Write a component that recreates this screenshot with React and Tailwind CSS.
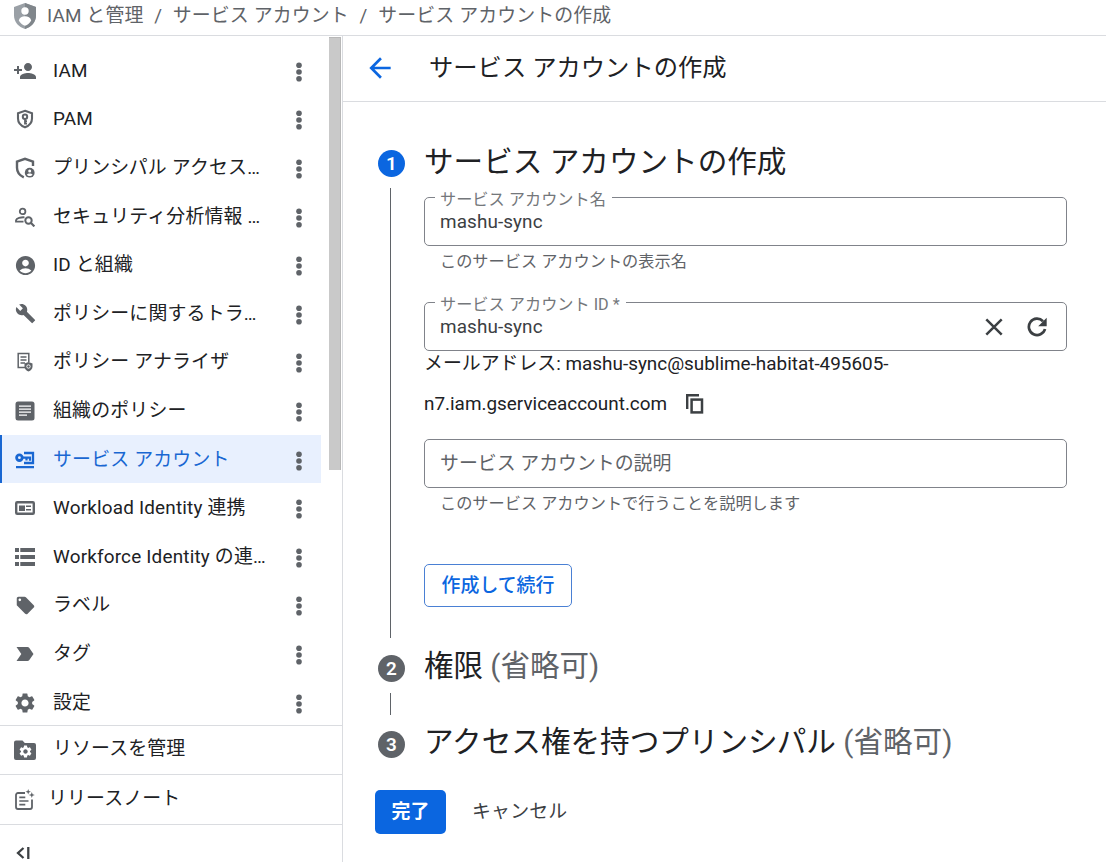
import React, { useState } from "react";
import {
  MdAccountCircle,
  MdArrowBack,
  MdBuild,
  MdLabelImportant,
  MdLocalOffer,
  MdPersonAdd,
  MdSettings,
} from "react-icons/md";

const ShieldLogo = () => (
  <svg width="22" height="26" viewBox="0 0 22 26">
    <path d="M11 0 22 4v8.500C22 19 17.500 24 11 26 4.500 24 0 19 0 12.500V4z" fill="#9aa0a6" />
    <path d="M11 0 22 4v8.500C22 19 17.500 24 11 26z" fill="#80868b" />
    <circle cx="11" cy="8" r="3.700" fill="#fff" />
    <path d="M4.800 17.500C5.500 14.500 8 13.200 11 13.200s5.500 1.300 6.200 4.300C15.800 20 13.800 21.800 11 22.800 8.200 21.800 6.200 20 4.800 17.500z" fill="#fff" />
  </svg>
);

const KeyShieldIcon = () => (
  <svg width="18" height="20" viewBox="0 0 18 20" fill="none" stroke="currentColor">
    <path d="M9 1.800 16 4.300v5.200c0 4-2.800 7.200-7 8.800-4.200-1.600-7-4.800-7-8.800V4.300z" strokeWidth="2.100" />
    <circle cx="9" cy="7.700" r="2.200" strokeWidth="2" />
    <path d="M9 10v5.500M9 12.200h2M9 14.500h2" strokeWidth="1.800" />
  </svg>
);

const ShieldPersonIcon = () => (
  <svg width="20" height="22" viewBox="0 0 20 22">
    <path
      d="M18 9V4.600L10 1.800 2 4.600v6.100c0 4.200 2.500 7.600 6.800 9.600"
      fill="none"
      stroke="currentColor"
      strokeWidth="2.400"
    />
    <circle cx="14.700" cy="15.700" r="4.900" fill="currentColor" />
    <circle cx="14.700" cy="14" r="1.500" fill="#fff" />
    <path d="M11.800 17.600c1.300-1.500 4.500-1.500 5.800 0-1.300 2-4.500 2-5.800 0z" fill="#fff" />
  </svg>
);

const PersonSearchIcon = () => (
  <svg width="20" height="20" viewBox="0 0 20 20" fill="none" stroke="currentColor">
    <circle cx="7.600" cy="4.400" r="2.800" strokeWidth="1.800" />
    <path d="M9.500 10.300C5.800 10 1.500 11.400 1 13.200v1.500h7.500" strokeWidth="1.800" />
    <circle cx="13.500" cy="13.500" r="3.200" strokeWidth="2" />
    <path d="m15.800 15.800 3.600 3.600" strokeWidth="2.200" />
  </svg>
);

const AnalyzerIcon = () => (
  <svg width="18" height="20" viewBox="0 0 18 20">
    <path
      d="M9 15.600H2.200V1.500h10.600v8.500M4.500 5h6M4.500 8h6M4.500 11h4.500"
      fill="none"
      stroke="currentColor"
      strokeWidth="1.500"
    />
    <path d="m12.500 10 4 1.400v3c0 2.400-1.600 4.100-4 5.100-2.400-1-4-2.700-4-5.100v-3z" fill="currentColor" />
    <circle cx="12.500" cy="14.500" r="1.700" fill="none" stroke="#fff" strokeWidth="0.900" />
  </svg>
);

const ArticleIcon = () => (
  <svg width="20" height="20" viewBox="0 0 20 20">
    <rect x="0.500" y="0.500" width="19" height="19" rx="2.500" fill="currentColor" />
    <path d="M4 5.200h12M4 8.200h12M4 11.200h12M4 14.200h8" stroke="#fff" strokeWidth="1.300" />
  </svg>
);

const ServiceAccountIcon = () => (
  <svg width="20" height="18" viewBox="0 0 20 18">
    <path d="M9 2h9v10H9M1 16.200h18" fill="none" stroke="currentColor" strokeWidth="2.300" />
    <circle cx="4.400" cy="6.700" r="2.800" fill="none" stroke="currentColor" strokeWidth="2.800" />
    <path d="M7 6.700h8v3M11.500 6.700v2.800" fill="none" stroke="currentColor" strokeWidth="2.200" />
  </svg>
);

const IdCardIcon = () => (
  <svg width="20" height="14" viewBox="0 0 20 14">
    <rect x="1.200" y="1.200" width="17.600" height="11.600" rx="1" fill="none" stroke="currentColor" strokeWidth="2.400" />
    <path d="M4 4.500h6v5.500H4zM11 4.500h5V6h-5zM11 8h5v1.500h-5z" fill="currentColor" />
  </svg>
);

const ListIcon = () => (
  <svg width="20" height="18" viewBox="0 0 20 18" fill="currentColor">
    <path d="M0 0h4v4H0zM5.300 0H20v4H5.300zM0 7h4v4H0zM5.300 7H20v4H5.300zM0 14h4v4H0zM5.300 14H20v4H5.300z" />
  </svg>
);

const FolderGearIcon = () => (
  <span className="relative block h-5 w-[22px]">
    <svg width="22" height="20" viewBox="0 0 22 20" fill="currentColor">
      <path d="M2 0.500h6.500L10.800 3H20a2 2 0 0 1 2 2v13a2 2 0 0 1-2 2H2a2 2 0 0 1-2-2V2.500a2 2 0 0 1 2-2z" />
    </svg>
    <MdSettings size={15} className="absolute top-[4px] left-[3.500px] text-white" />
  </span>
);

const ReleaseNotesIcon = () => (
  <svg width="20" height="21" viewBox="0 0 20 21" fill="none" stroke="currentColor">
    <path d="M10 4H3a2 2 0 0 0-2 2v12a2 2 0 0 0 2 2h12a2 2 0 0 0 2-2v-7.500" strokeWidth="1.800" />
    <path d="M4.300 8.300h6M4.300 12h9.200M4.300 15.700h6" strokeWidth="1.700" />
    <path
      d="m13.200 0 .7 2 2 .7-2 .7-.7 2-.7-2-2-.7 2-.7zM16.800 3l.8 2.200 2.200.8-2.200.8-.8 2.200-.8-2.200-2.200-.8 2.200-.8z"
      fill="currentColor"
      stroke="none"
    />
  </svg>
);

const CloseIcon = () => (
  <svg width="18" height="18" viewBox="0 0 18 18" fill="none" stroke="currentColor" strokeWidth="2.500">
    <path d="m1.300 1.300 15.400 15.400M16.700 1.300 1.300 16.700" />
  </svg>
);

const RefreshIcon = () => (
  <svg width="20" height="20" viewBox="0 0 20 20">
    <path
      d="M18 12a8.200 8.200 0 1 1-2-7.800"
      fill="none"
      stroke="currentColor"
      strokeWidth="2.700"
    />
    <path d="M19.700 0.700v8.500h-8.500z" fill="currentColor" />
  </svg>
);

const CopyIcon = () => (
  <svg width="18" height="20" viewBox="0 0 18 20" fill="none" stroke="currentColor">
    <path d="M1.200 15V1.200h11.800" strokeWidth="2.400" />
    <rect x="5.600" y="5.600" width="10.400" height="12.800" strokeWidth="2.500" />
  </svg>
);

const MoreIcon = () => (
  <svg width="6" height="20" viewBox="0 0 6 20" fill="currentColor">
    <circle cx="3" cy="3.200" r="2.800" />
    <circle cx="3" cy="10" r="2.800" />
    <circle cx="3" cy="16.800" r="2.800" />
  </svg>
);

const menuItems = [
  { label: "IAM", icon: <MdPersonAdd size={24} /> },
  { label: "PAM", icon: <KeyShieldIcon /> },
  { label: "プリンシパル アクセス…", icon: <ShieldPersonIcon /> },
  { label: "セキュリティ分析情報 …", icon: <PersonSearchIcon /> },
  { label: "ID と組織", icon: <MdAccountCircle size={23} /> },
  { label: "ポリシーに関するトラ…", icon: <MdBuild size={21} /> },
  { label: "ポリシー アナライザ", icon: <AnalyzerIcon /> },
  { label: "組織のポリシー", icon: <ArticleIcon /> },
  { label: "サービス アカウント", icon: <ServiceAccountIcon />, active: true },
  { label: "Workload Identity 連携", icon: <IdCardIcon /> },
  { label: "Workforce Identity の連…", icon: <ListIcon /> },
  { label: "ラベル", icon: <MdLocalOffer size={21} /> },
  { label: "タグ", icon: <MdLabelImportant size={24} /> },
  { label: "設定", icon: <MdSettings size={24} /> },
];

const MenuItem = ({ item }) => (
  <li
    className={`flex h-[48.6px] w-[321px] items-center ${
      item.active ? "bg-[#e8f0fe] text-[#1967d2]" : "text-[#202124]"
    }`}
  >
    <span className={`h-full w-0.5 ${item.active ? "bg-[#1967d2]" : ""}`} />
    <span
      className={`mt-px flex w-[46px] justify-center ${
        item.active ? "text-[#1967d2]" : "text-[#5f6368]"
      }`}
    >
      {item.icon}
    </span>
    <span className="ml-[5px] flex-1 pt-px tracking-[0.19px] whitespace-nowrap">
      {item.label}
    </span>
    <button className="mt-[3px] mr-[19px] text-[#5f6368]">
      <MoreIcon />
    </button>
  </li>
);

const Badge = ({ number, active }) => (
  <span
    className={`flex h-[27px] w-[27px] shrink-0 items-center justify-center rounded-full text-[18.9px] font-semibold text-white ${
      active ? "bg-[#0b66e0]" : "bg-[#5f6368]"
    }`}
  >
    {number}
  </span>
);

const Field = ({ label, value, onChange, placeholder, children }) => (
  <div className="relative flex h-[49px] w-[643px] items-center rounded-[5px] border border-[#80838a] pr-[17px] pl-[15px]">
    {label && (
      <label className="absolute -top-[8px] left-[10px] bg-white pr-[6px] pl-[5px] text-[16.2px] leading-5 whitespace-nowrap text-[#74777b]">
        {label}
      </label>
    )}
    <input
      className="relative min-w-0 flex-1 bg-transparent tracking-[0.1px] text-[#3c4043] outline-none placeholder:tracking-normal placeholder:text-[#5f6368]"
      value={value}
      onChange={(e) => onChange(e.target.value)}
      placeholder={placeholder}
    />
    {children}
  </div>
);

const App = () => {
  const [name, setName] = useState("mashu-sync");
  const [accountId, setAccountId] = useState("mashu-sync");
  const [description, setDescription] = useState("");

  return (
    <div
      lang="ja"
      className="flex h-[862px] w-[1106px] flex-col overflow-hidden bg-white font-[Roboto,'Noto_Sans_CJK_JP',sans-serif] text-[18.9px] leading-7 text-[#202124]"
    >
      <header className="flex h-9 shrink-0 items-center border-b border-[#dadce0] pb-[3px] pl-[14px] tracking-[0.14px] text-[#5f6368]">
        <ShieldLogo />
        <span className="ml-[11px]">IAM と管理</span>
        <span className="mx-[10.700px]">/</span>
        <span>サービス アカウント</span>
        <span className="mx-[10.700px]">/</span>
        <span>サービス アカウントの作成</span>
      </header>

      <div className="flex min-h-0 flex-1">
        <aside className="flex w-[343px] shrink-0 flex-col border-r border-[#dadce0]">
          <div className="flex h-[689px] shrink-0 justify-between overflow-hidden">
            <ul className="pt-[10px]">
              {menuItems.map((item) => (
                <MenuItem key={item.label} item={item} />
              ))}
            </ul>
            <div className="mt-px mr-px h-[433px] w-3 border-t border-r border-[#b8b8b8] bg-[#c9c9c9]" />
          </div>
          <div className="flex h-[49px] shrink-0 items-center border-t border-[#dadce0] pl-[14px]">
            <span className="text-[#5f6368]">
              <FolderGearIcon />
            </span>
            <span className="ml-[17px] pb-[2px] tracking-[0.15px]">リソースを管理</span>
          </div>
          <div className="flex h-[50px] shrink-0 items-center border-t border-[#dadce0] pl-[15px]">
            <span className="text-[#5f6368]">
              <ReleaseNotesIcon />
            </span>
            <span className="ml-[13px] pb-[2px] tracking-[0.15px]">リリースノート</span>
          </div>
          <div className="flex-1 border-t border-[#dadce0] pt-[22px] pl-4">
            <svg width="14" height="12" viewBox="0 0 14 12" fill="none" stroke="#3c4043" strokeWidth="2.300">
              <path d="M7.500 1 2 6l5.500 5M12.300 0v12" />
            </svg>
          </div>
        </aside>

        <main className="flex flex-1 flex-col">
          <div className="flex h-[66px] shrink-0 items-center border-b border-[#dadce0] pl-6">
            <MdArrowBack size={32} className="-mt-[2px] -ml-[3px] text-[#0b66e0]" />
            <h1 className="ml-[33px] pb-[2px] text-[24.3px]">サービス アカウントの作成</h1>
          </div>

          <section className="mt-[38px] flex h-[498px] shrink-0 pl-[35px]">
            <div className="flex w-[46px] flex-col pt-[10px]">
              <Badge number="1" active />
              <span className="mt-[11px] ml-3 w-px flex-1 bg-[#5f6368]" />
            </div>
            <div className="w-[643px]">
              <h2 className="flex h-[57px] items-center pb-[13px] text-[29.6px]">
                サービス アカウントの作成
              </h2>
              <Field label="サービス アカウント名" value={name} onChange={setName} />
              <p className="h-14 pt-[2px] pl-4 text-[16.2px] text-[#5f6368]">
                このサービス アカウントの表示名
              </p>
              <Field label="サービス アカウント ID *" value={accountId} onChange={setAccountId}>
                <button className="mr-6 text-[#3c4043]" onClick={() => setAccountId("")}>
                  <CloseIcon />
                </button>
                <button className="mr-[2px] text-[#3c4043]">
                  <RefreshIcon />
                </button>
              </Field>
              <div className="h-[88px] leading-10">
                <p className="relative -top-[7px]">
                  メールアドレス: mashu-sync@sublime-habitat-495605-
                  <span className="flex items-center">
                    n7.iam.gserviceaccount.com
                    <button className="ml-[19px] text-[#3c4043]">
                      <CopyIcon />
                    </button>
                  </span>
                </p>
              </div>
              <Field
                value={description}
                onChange={setDescription}
                placeholder="サービス アカウントの説明"
              />
              <p className="h-[76px] pt-[2px] pl-4 text-[16.2px] text-[#5f6368]">
                このサービス アカウントで行うことを説明します
              </p>
              <button className="flex h-[43px] w-[148px] items-center justify-center rounded-[5px] border border-[#4a80d4] font-medium text-[#0b66e0]">
                作成して続行
              </button>
            </div>
          </section>

          <section className="mt-[17px] flex h-[60px] shrink-0 pl-[35px]">
            <div className="flex w-[46px] flex-col">
              <Badge number="2" />
              <span className="mt-[11px] ml-3 w-px flex-1 bg-[#5f6368]" />
            </div>
            <h2 className="-mt-[3px] text-[29.5px]">
              権限 <span className="text-[#5f6368]">(省略可)</span>
            </h2>
          </section>

          <section className="mt-4 flex h-[27px] shrink-0 pl-[35px]">
            <div className="w-[46px]">
              <Badge number="3" />
            </div>
            <h2 className="-mt-[3px] text-[29.6px]">
              アクセス権を持つプリンシパル <span className="text-[#5f6368]">(省略可)</span>
            </h2>
          </section>

          <div className="mt-8 flex items-center pl-8">
            <button className="h-11 w-[71px] rounded-[5px] bg-[#0b66e0] font-semibold text-white">
              完了
            </button>
            <button className="ml-[26px] tracking-[0.2px] text-[#3c4043]">キャンセル</button>
          </div>
        </main>
      </div>
    </div>
  );
};

export default App;
